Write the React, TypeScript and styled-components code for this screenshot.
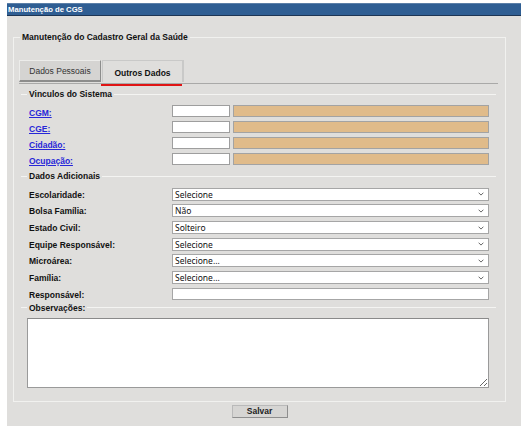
import React from "react";
import styled, { createGlobalStyle } from "styled-components";

const GlobalStyle = createGlobalStyle`
  html, body {
    margin: 0;
    padding: 0;
    background: #ffffff;
  }
  body {
    font-family: "Liberation Sans", Arial, sans-serif;
  }
`;

const Window = styled.div`
  margin: 3px 0 0 7px;
  width: 514px;
  height: 423px;
  background-color: #dfdedc;
  box-sizing: border-box;
`;

const TitleBar = styled.div`
  height: 13px;
  box-sizing: border-box;
  background-color: #2f5e93;
  border-top: 1px solid #5b7fa8;
  border-bottom: 1px solid #1d3554;
  color: #ffffff;
  font-size: 7.7px;
  font-weight: bold;
  line-height: 11px;
  padding-left: 1px;
  white-space: nowrap;
`;

const MainFieldset = styled.fieldset`
  margin: 15px 0 0 6px;
  width: 493px;
  box-sizing: border-box;
  border: 1px solid #f1f1ef;
  padding: 17px 7px 13px 5px;
  min-width: 0;
`;

const MainLegend = styled.legend`
  font-size: 8.5px;
  font-weight: bold;
  line-height: 12px;
  color: #111111;
  padding: 0 2px;
  margin-left: 1px;
  white-space: nowrap;
`;

const TabStrip = styled.div`
  display: flex;
  height: 23px;
  border-bottom: 1px solid #a9a9a8;
  box-sizing: content-box;
`;

type TabProps = { $active?: boolean };
const Tab = styled.div<TabProps>`
  position: relative;
  width: 82px;
  height: 22px;
  box-sizing: border-box;
  display: flex;
  align-items: center;
  justify-content: center;
  font-size: 8.5px;
  white-space: nowrap;
  font-weight: ${(p) => (p.$active ? "bold" : "normal")};
  color: ${(p) => (p.$active ? "#111111" : "#333333")};
  background-color: ${(p) => (p.$active ? "#dfdedc" : "#d5d4d2")};
  border-top: 1px solid ${(p) => (p.$active ? "#c9c9c8" : "#ececea")};
  border-left: 1px solid ${(p) => (p.$active ? "#c9c9c8" : "#ececea")};
  border-right: ${(p) => (p.$active ? "2px solid #c9c9c8" : "1px solid #8d8d8c")};
  border-bottom: ${(p) => (p.$active ? "none" : "2px solid #8d8d8c")};
  margin-left: ${(p) => (p.$active ? "1px" : "0")};
  padding-top: ${(p) => (p.$active ? "2px" : "0")};

  &::after {
    content: "";
    display: ${(p) => (p.$active ? "block" : "none")};
    position: absolute;
    left: -2px;
    width: 81px;
    bottom: -4px;
    height: 2px;
    background-color: #e01414;
  }
`;

type SectionProps = { $gap: number };
const Section = styled.fieldset<SectionProps>`
  margin: ${(p) => p.$gap}px 2px 0 2px;
  padding: 0 7px 0 6px;
  border: none;
  border-top: 1px solid #f4f4f2;
  min-width: 0;
`;

const SectionLegend = styled.legend`
  font-size: 8.5px;
  font-weight: bold;
  line-height: 12px;
  color: #111111;
  padding: 0 2px;
  white-space: nowrap;
`;

const LinkRows = styled.div`
  display: grid;
  grid-template-columns: 140px 58px 256px;
  column-gap: 3px;
  grid-auto-rows: 16px;
  align-items: center;
  padding: 3px 0 0 2px;
`;

const LinkLabel = styled.a`
  font-size: 8.5px;
  font-weight: bold;
  color: #2727d8;
  text-decoration: underline;
  white-space: nowrap;
  line-height: 10px;
  display: inline-block;
`;

const CodeInput = styled.div`
  height: 12px;
  box-sizing: border-box;
  background-color: #ffffff;
  border: 1px solid #9e9e9e;
`;

const NameBox = styled.div`
  height: 12px;
  box-sizing: border-box;
  background-color: #e0bb8a;
  border: 1px solid #a3a3a3;
`;

const FieldRows = styled.div`
  display: grid;
  grid-template-columns: 143px 317px;
  grid-auto-rows: 16.67px;
  align-items: center;
  padding: 4px 0 0 2px;
`;

const FieldLabel = styled.div`
  font-size: 8.5px;
  font-weight: bold;
  color: #111111;
  white-space: nowrap;
  line-height: 10px;
  padding-top: 1px;
`;

const SelectBox = styled.div`
  height: 13px;
  box-sizing: border-box;
  background-color: #ffffff;
  border: 1px solid #a6a6a6;
  display: flex;
  align-items: center;
  justify-content: space-between;
  padding: 0 4px 0 2px;
  font-family: "Noto Sans", "Open Sans", sans-serif;
  font-size: 8.5px;
  color: #111111;
  white-space: nowrap;
`;

const TextBox = styled.div`
  height: 12px;
  box-sizing: border-box;
  background-color: #ffffff;
  border: 1px solid #a6a6a6;
`;

const Notes = styled.textarea`
  display: block;
  margin-top: 4px;
  width: 462px;
  height: 70px;
  box-sizing: border-box;
  border: 1px solid #9a9a9a;
  border-top-color: #8a8a8a;
  background-color: #ffffff;
  resize: both;
  padding: 0;
  outline: none;
`;

const Footer = styled.div`
  width: 493px;
  margin-left: 6px;
  display: flex;
  justify-content: center;
  padding-top: 3px;
`;

const SaveButton = styled.button`
  width: 56px;
  height: 13px;
  box-sizing: border-box;
  padding: 0;
  background-color: #d6d5d3;
  border: 1px solid #8e8e8e;
  border-top-color: #b9b9b9;
  border-left-color: #b9b9b9;
  font-family: "Liberation Sans", Arial, sans-serif;
  font-size: 8.5px;
  font-weight: bold;
  color: #222222;
  line-height: 11px;
`;

function Chevron() {
  return (
    <svg width="6" height="4" viewBox="0 0 6 4">
      <path d="M0.6 0.7 L3 3.1 L5.4 0.7" fill="none" stroke="#666" strokeWidth="1" />
    </svg>
  );
}

const links = ["CGM:", "CGE:", "Cidadão:", "Ocupação:"];

const selects: [string, string][] = [
  ["Escolaridade:", "Selecione"],
  ["Bolsa Família:", "Não"],
  ["Estado Civil:", "Solteiro"],
  ["Equipe Responsável:", "Selecione"],
  ["Microárea:", "Selecione..."],
  ["Família:", "Selecione..."],
];

export default function App() {
  return (
    <>
      <GlobalStyle />
      <Window>
        <TitleBar>Manutenção de CGS</TitleBar>
        <MainFieldset>
          <MainLegend>Manutenção do Cadastro Geral da Saúde</MainLegend>
          <TabStrip>
            <Tab>Dados Pessoais</Tab>
            <Tab $active>Outros Dados</Tab>
          </TabStrip>

          <Section $gap={4}>
            <SectionLegend>Vinculos do Sistema</SectionLegend>
            <LinkRows>
              {links.map((l) => (
                <React.Fragment key={l}>
                  <div>
                    <LinkLabel href="#">{l}</LinkLabel>
                  </div>
                  <CodeInput />
                  <NameBox />
                </React.Fragment>
              ))}
            </LinkRows>
          </Section>

          <Section $gap={3}>
            <SectionLegend>Dados Adicionais</SectionLegend>
            <FieldRows>
              {selects.map(([label, value]) => (
                <React.Fragment key={label}>
                  <FieldLabel>{label}</FieldLabel>
                  <SelectBox>
                    <span>{value}</span>
                    <Chevron />
                  </SelectBox>
                </React.Fragment>
              ))}
              <FieldLabel>Responsável:</FieldLabel>
              <TextBox />
            </FieldRows>
          </Section>

          <Section $gap={-1}>
            <SectionLegend>Observações:</SectionLegend>
            <Notes />
          </Section>
        </MainFieldset>
        <Footer>
          <SaveButton>Salvar</SaveButton>
        </Footer>
      </Window>
    </>
  );
}
